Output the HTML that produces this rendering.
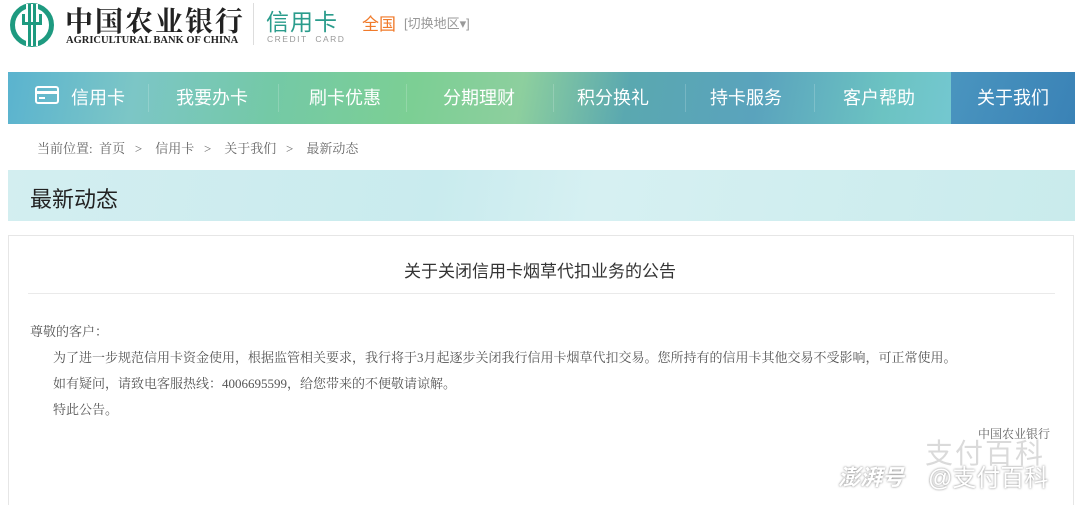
<!DOCTYPE html>
<html><head><meta charset="utf-8"><style>
*{margin:0;padding:0;box-sizing:border-box}
body{width:1080px;height:494px;overflow:hidden;background:#fff;font-family:"Liberation Sans","Noto Sans CJK SC",sans-serif;position:relative}
.a{position:absolute;white-space:nowrap}
.serif{font-family:"Liberation Serif","Noto Serif CJK SC",serif}
.nav{position:absolute;left:8px;top:72px;width:1067px;height:52px;background:linear-gradient(100deg,#5ab3cf 0%,#7cc6c6 12%,#74c9a6 25%,#7ccf94 38%,#8dcf9e 48%,#5aa8b0 58%,#5aa3bd 70%,#6cc3c2 82%,#73c7cf 88%)}
.nav .it{position:absolute;top:0;width:120px;margin-left:-60px;height:52px;line-height:52px;color:#fff;font-size:18px;text-align:center}
.nav .sep{position:absolute;top:12px;width:1px;height:28px;background:rgba(255,255,255,.18)}
</style></head><body>
<svg class="a" style="left:9px;top:2px" width="46" height="46" viewBox="0 0 46 46"><circle cx="23" cy="23" r="19.5" fill="none" stroke="#1e9a80" stroke-width="5"/><rect x="17" y="2" width="12" height="42" fill="#fff"/><rect x="19" y="2" width="3" height="42" fill="#1e9a80"/><rect x="24" y="2" width="3" height="42" fill="#1e9a80"/><rect x="13" y="20" width="20" height="3" fill="#1e9a80"/><rect x="13" y="12" width="3" height="11" fill="#1e9a80"/><rect x="30" y="12" width="3" height="11" fill="#1e9a80"/></svg>
<div class="a serif" style="left:65px;top:0px;font-size:28px;font-weight:bold;color:#222;letter-spacing:2px">中国农业银行</div>
<div class="a serif" style="left:66px;top:35px;font-size:10.5px;font-weight:bold;color:#222">AGRICULTURAL BANK OF CHINA</div>
<div class="a" style="left:253px;top:3px;width:1px;height:42px;background:#ddd"></div>
<div class="a" style="left:266px;top:3px;font-size:23px;color:#2a9c8c;letter-spacing:1px">信用卡</div>
<div class="a" style="left:267px;top:34px;font-size:8.5px;color:#999;letter-spacing:1.5px">CREDIT&nbsp; CARD</div>
<div class="a" style="left:362px;top:10px;font-size:17px;color:#f07a2a">全国</div>
<div class="a" style="left:404px;top:13px;font-size:13px;color:#999">[切换地区▾]</div>
<div class="nav">
<div style="position:absolute;right:0;top:0;width:124px;height:52px;background:linear-gradient(110deg,#4a95bf,#3a82b6)"></div>
<svg style="position:absolute;left:27px;top:14px" width="24" height="18" viewBox="0 0 24 18"><rect x="1" y="1" width="22" height="16" rx="2" fill="none" stroke="#fff" stroke-width="2"/><rect x="1" y="5" width="22" height="3" fill="#fff"/><rect x="4" y="11" width="6" height="2" fill="#fff"/></svg>
<div class="it" style="left:90px">信用卡</div>
<div class="sep" style="left:140px"></div>
<div class="it" style="left:204px">我要办卡</div>
<div class="sep" style="left:270px"></div>
<div class="it" style="left:337px">刷卡优惠</div>
<div class="sep" style="left:398px"></div>
<div class="it" style="left:471px">分期理财</div>
<div class="sep" style="left:545px"></div>
<div class="it" style="left:605px">积分换礼</div>
<div class="sep" style="left:677px"></div>
<div class="it" style="left:738px">持卡服务</div>
<div class="sep" style="left:806px"></div>
<div class="it" style="left:871px">客户帮助</div>
<div class="it" style="left:1005px">关于我们</div>
</div>
<div class="a serif" style="left:37px;top:138px;font-size:13px;color:#666">当前位置:&nbsp; 首页 &nbsp;&nbsp;&gt;&nbsp;&nbsp;&nbsp; 信用卡 &nbsp;&nbsp;&gt;&nbsp;&nbsp;&nbsp; 关于我们 &nbsp;&nbsp;&gt;&nbsp;&nbsp;&nbsp; 最新动态</div>
<div class="a" style="left:8px;top:170px;width:1067px;height:51px;background:linear-gradient(100deg,#d3eef0 0%,#c9ebee 40%,#d6f0f2 55%,#c9ebec 100%)"></div>
<div class="a" style="left:30px;top:182px;font-size:22px;color:#222">最新动态</div>
<div class="a" style="left:8px;top:235px;width:1066px;height:270px;border:1px solid #e6e6e6;border-bottom:none"></div>
<div class="a" style="left:0;width:1080px;text-align:center;top:257px;font-size:17px;color:#333">关于关闭信用卡烟草代扣业务的公告</div>
<div class="a" style="left:28px;top:293px;width:1027px;height:1px;background:#eaeaea"></div>
<div class="a serif" style="left:30px;top:321px;font-size:13px;color:#555">尊敬的客户：</div>
<div class="a serif" style="left:53px;top:347px;font-size:13px;color:#555">为了进一步规范信用卡资金使用，根据监管相关要求，我行将于3月起逐步关闭我行信用卡烟草代扣交易。您所持有的信用卡其他交易不受影响，可正常使用。</div>
<div class="a serif" style="left:53px;top:373px;font-size:13px;color:#555">如有疑问，请致电客服热线：4006695599，给您带来的不便敬请谅解。</div>
<div class="a serif" style="left:53px;top:399px;font-size:13px;color:#555">特此公告。</div>
<div class="a serif" style="left:978px;top:425px;font-size:12px;color:#666">中国农业银行</div>
<div class="a" style="left:925px;top:432px;font-size:28px;color:rgba(150,150,150,.35);letter-spacing:2px">支付百科</div>
<div class="a" style="left:838px;top:460px;font-size:22px;font-style:italic;font-weight:bold;color:#fff;text-shadow:0 0 2px #777">澎湃号</div>
<div class="a" style="left:928px;top:458px;font-size:24px;color:#fff;text-shadow:0 0 2px #777">@支付百科</div>
</body></html>
